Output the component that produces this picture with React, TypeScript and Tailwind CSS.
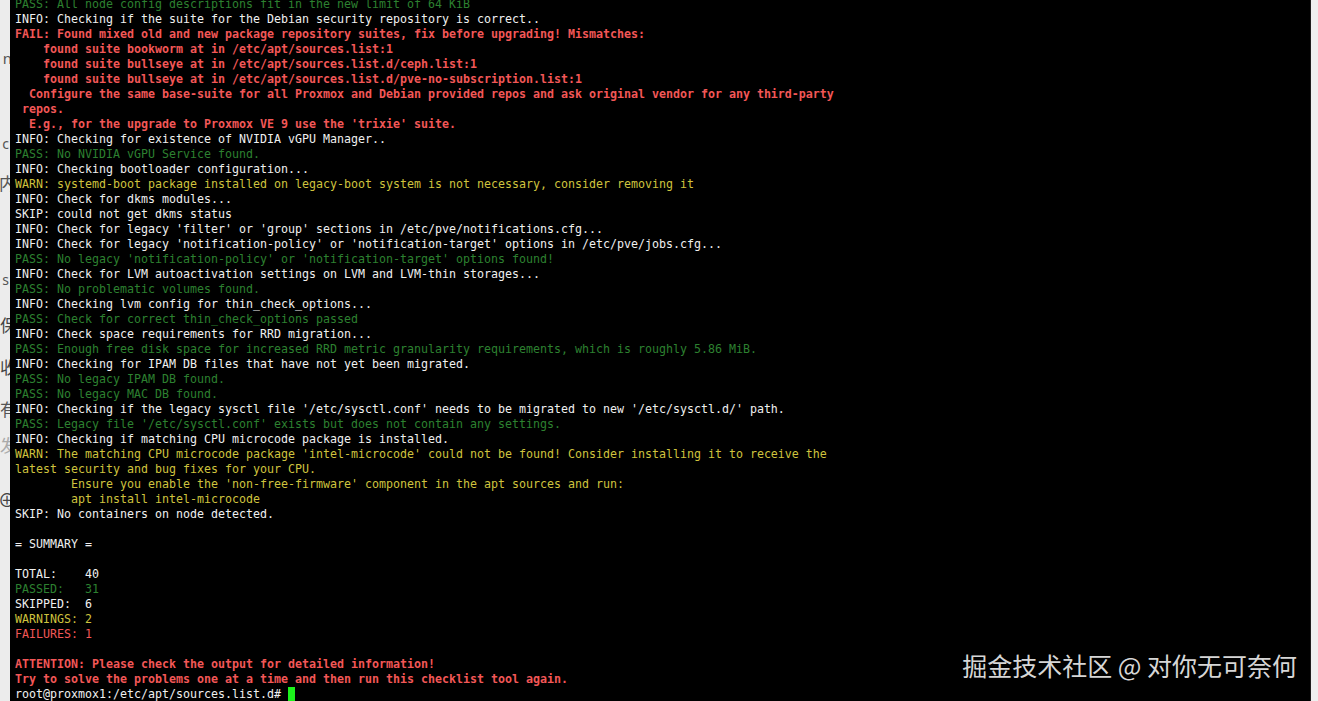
import React from 'react';

type Tone = 'info' | 'pass' | 'warn' | 'fail' | 'failReg';

const lines: [Tone, string][] = [
  ['pass', 'PASS: All node config descriptions fit in the new limit of 64 KiB'],
  ['info', 'INFO: Checking if the suite for the Debian security repository is correct..'],
  ['fail', 'FAIL: Found mixed old and new package repository suites, fix before upgrading! Mismatches:'],
  ['fail', '    found suite bookworm at in /etc/apt/sources.list:1'],
  ['fail', '    found suite bullseye at in /etc/apt/sources.list.d/ceph.list:1'],
  ['fail', '    found suite bullseye at in /etc/apt/sources.list.d/pve-no-subscription.list:1'],
  ['fail', '  Configure the same base-suite for all Proxmox and Debian provided repos and ask original vendor for any third-party'],
  ['fail', ' repos.'],
  ['fail', "  E.g., for the upgrade to Proxmox VE 9 use the 'trixie' suite."],
  ['info', 'INFO: Checking for existence of NVIDIA vGPU Manager..'],
  ['pass', 'PASS: No NVIDIA vGPU Service found.'],
  ['info', 'INFO: Checking bootloader configuration...'],
  ['warn', 'WARN: systemd-boot package installed on legacy-boot system is not necessary, consider removing it'],
  ['info', 'INFO: Check for dkms modules...'],
  ['info', 'SKIP: could not get dkms status'],
  ['info', "INFO: Check for legacy 'filter' or 'group' sections in /etc/pve/notifications.cfg..."],
  ['info', "INFO: Check for legacy 'notification-policy' or 'notification-target' options in /etc/pve/jobs.cfg..."],
  ['pass', "PASS: No legacy 'notification-policy' or 'notification-target' options found!"],
  ['info', 'INFO: Check for LVM autoactivation settings on LVM and LVM-thin storages...'],
  ['pass', 'PASS: No problematic volumes found.'],
  ['info', 'INFO: Checking lvm config for thin_check_options...'],
  ['pass', 'PASS: Check for correct thin_check_options passed'],
  ['info', 'INFO: Check space requirements for RRD migration...'],
  ['pass', 'PASS: Enough free disk space for increased RRD metric granularity requirements, which is roughly 5.86 MiB.'],
  ['info', 'INFO: Checking for IPAM DB files that have not yet been migrated.'],
  ['pass', 'PASS: No legacy IPAM DB found.'],
  ['pass', 'PASS: No legacy MAC DB found.'],
  ['info', "INFO: Checking if the legacy sysctl file '/etc/sysctl.conf' needs to be migrated to new '/etc/sysctl.d/' path."],
  ['pass', "PASS: Legacy file '/etc/sysctl.conf' exists but does not contain any settings."],
  ['info', 'INFO: Checking if matching CPU microcode package is installed.'],
  ['warn', "WARN: The matching CPU microcode package 'intel-microcode' could not be found! Consider installing it to receive the"],
  ['warn', 'latest security and bug fixes for your CPU.'],
  ['warn', "        Ensure you enable the 'non-free-firmware' component in the apt sources and run:"],
  ['warn', '        apt install intel-microcode'],
  ['info', 'SKIP: No containers on node detected.'],
  ['info', ''],
  ['info', '= SUMMARY ='],
  ['info', ''],
  ['info', 'TOTAL:    40'],
  ['pass', 'PASSED:   31'],
  ['info', 'SKIPPED:  6'],
  ['warn', 'WARNINGS: 2'],
  ['failReg', 'FAILURES: 1'],
  ['info', ''],
  ['fail', 'ATTENTION: Please check the output for detailed information!'],
  ['fail', 'Try to solve the problems one at a time and then run this checklist tool again.'],
];

const toneClass: Record<Tone, string> = {
  info: 'text-[#f0f0f0]',
  pass: 'text-[#2d8030]',
  warn: 'text-[#cfc33e]',
  fail: 'text-[#f25757] font-bold',
  failReg: 'text-[#f25757]',
};

// bits of the window that sits behind the terminal
const behind: { gap: string; ch: string; cls: string }[] = [
  { gap: 'mt-[48px]', ch: 'n', cls: 'text-[#555] text-[15px] -mr-[2px]' },
  { gap: 'mt-[66px]', ch: 'c', cls: 'text-[#555] text-[14px] mr-[1px]' },
  { gap: 'mt-[20px]', ch: '内', cls: 'text-[#555] text-[17px] -mr-[6px]' },
  { gap: 'mt-[76px]', ch: 's', cls: 'text-[#555] text-[14px] mr-[1px]' },
  { gap: 'mt-[26px]', ch: '保', cls: 'text-[#444] text-[17px] -mr-[7px]' },
  { gap: 'mt-[22px]', ch: '收', cls: 'text-[#444] text-[17px] -mr-[7px]' },
  { gap: 'mt-[22px]', ch: '有', cls: 'text-[#555] text-[17px] -mr-[7px]' },
  { gap: 'mt-[16px]', ch: '发', cls: 'text-[#aaa] text-[17px] -mr-[7px]' },
  { gap: 'mt-[34px]', ch: '⊕', cls: 'text-[#444] text-[18px] -mr-[6px]' },
];

export default function App() {
  return (
    <div className="relative flex h-[701px] w-full overflow-hidden bg-black">
      {/* strip of the window behind */}
      <div className="flex w-[10px] shrink-0 flex-col overflow-hidden bg-[#ececec] font-['Noto_Sans','Noto_Sans_CJK_SC',sans-serif]">
        {behind.map((b) => (
          <div key={b.ch} className={`flex h-[20px] justify-end leading-[20px] ${b.gap}`}>
            <span className={`whitespace-nowrap ${b.cls}`}>{b.ch}</span>
          </div>
        ))}
      </div>

      {/* terminal */}
      <div className="flex-1 overflow-hidden pl-[5px] font-['DejaVu_Sans_Mono','Liberation_Mono',monospace] text-[11.63px] leading-[15px]">
        <div className="-mt-[3px]">
          {lines.map(([tone, text], i) => (
            <div key={i} className={`h-[15px] whitespace-pre ${toneClass[tone]}`}>
              {text}
            </div>
          ))}
          <div className="flex h-[15px] items-center whitespace-pre text-[#f0f0f0]">
            <span>root@proxmox1:/etc/apt/sources.list.d# </span>
            <span className="h-[15px] w-[7px] bg-[#1cf21c]" />
          </div>
        </div>
      </div>

      {/* right edge */}
      <div className="w-[1px] shrink-0 bg-[#1e1e1e]" />
      <div className="w-[7px] shrink-0 bg-[#efefef]" />

      {/* watermark */}
      <div className="absolute bottom-[21px] right-[21px] font-['Noto_Sans_CJK_SC',sans-serif] text-[25px] leading-[29px] text-[#d6d6d6]">
        掘金技术社区 @ 对你无可奈何
      </div>
    </div>
  );
}
